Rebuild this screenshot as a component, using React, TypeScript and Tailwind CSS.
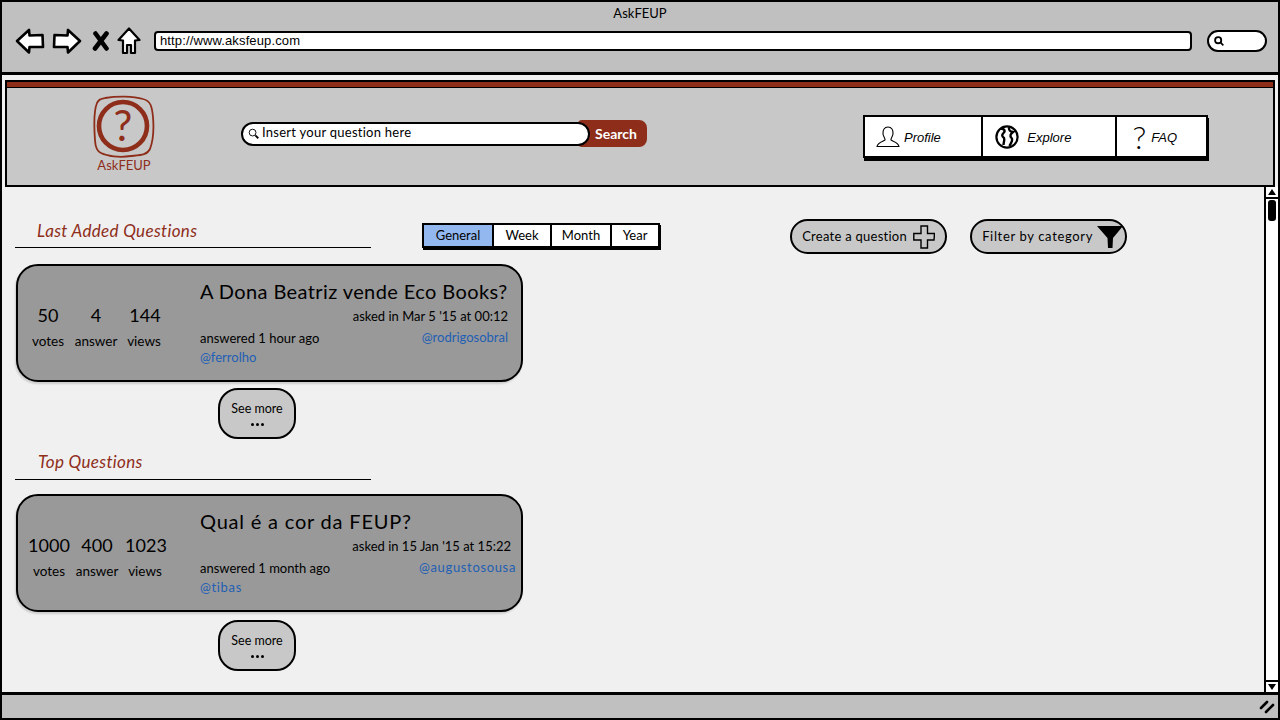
const SKETCH = "font-['Lato','Noto_Sans',sans-serif]"

function BackIcon() {
  return (
    <svg width="30" height="26" viewBox="0 0 30 26" fill="#fff" stroke="#000" strokeWidth="2.6" strokeLinejoin="round">
      <path d="M2 13 L14 2 L14.5 7.5 L27.5 7 L28 19 L14.5 19 L14 24.5 Z" />
    </svg>
  )
}

function ForwardIcon() {
  return (
    <svg width="30" height="26" viewBox="0 0 30 26" fill="#fff" stroke="#000" strokeWidth="2.6" strokeLinejoin="round">
      <path d="M28 13 L16 2 L15.5 7.5 L2.5 7 L2 19 L15.5 19 L16 24.5 Z" />
    </svg>
  )
}

function CloseIcon() {
  return (
    <svg width="18" height="20" viewBox="0 0 18 20" stroke="#000" strokeWidth="4.6" strokeLinecap="round">
      <path d="M3.5 2.5 L14.5 17.5 M14.5 2.5 L3 17.5" />
    </svg>
  )
}

function HomeIcon() {
  return (
    <svg width="24" height="28" viewBox="0 0 24 28" fill="#fff" stroke="#000" strokeWidth="2.2" strokeLinejoin="round">
      <path d="M12 1.5 L22.5 13 L18 13.5 L18 26 L14 26 L14 18 L10 18 L10 26 L6 26 L6 13.5 L1.5 13 Z" />
    </svg>
  )
}

function SearchGlass({ size = 12, bold = false }: { size?: number; bold?: boolean }) {
  return (
    <svg width={size} height={size} viewBox="0 0 12 12" fill="none" stroke="#000" strokeWidth={bold ? 2.2 : 1}>
      <circle cx="5" cy="5" r="3.7" />
      <path d="M8 8 L11.2 11.2" strokeWidth="2" />
    </svg>
  )
}

function Logo() {
  return (
    <svg width="62" height="64" viewBox="0 0 62 64" fill="none" stroke="#8e2d1a">
      <path
        d="M12 3 C24 1 40 1 50 4 C58 6 59 12 60 22 C61 34 60 46 57 54 C54 60 48 60 38 61 C26 63 14 61 8 58 C2 55 2 48 1.5 36 C1 24 1.5 14 4 8 C6 4 8 4 12 3 Z"
        strokeWidth="1.8"
      />
      <circle cx="30" cy="31" r="24" strokeWidth="4.6" />
      <text x="30" y="46" textAnchor="middle" fontFamily="Lato, sans-serif" fontSize="42" fill="#8e2d1a" stroke="none">
        ?
      </text>
    </svg>
  )
}

function ProfileIcon() {
  return (
    <svg width="24" height="22" viewBox="0 0 24 22" fill="none" stroke="#000" strokeWidth="1.1">
      <path d="M1 20.5 C2 16 7 15.5 9 14 C9.5 12.5 7.5 11 7 8 C6.5 4 8.5 1 12 1 C15.5 1 17.5 4 17 8 C16.5 11 14.5 12.5 15 14 C17 15.5 22 16 23 20.5 Z" />
    </svg>
  )
}

function GlobeIcon() {
  return (
    <svg width="24" height="24" viewBox="0 0 24 24">
      <circle cx="12" cy="12" r="10.6" fill="#fff" stroke="#000" strokeWidth="2.2" />
      <path d="M6 3.5 C10 4 10.5 6 8.5 8 C6.5 10 7 11.5 9 13 C10 15 8.5 17 8.5 20" fill="none" stroke="#000" strokeWidth="2.4" />
      <path d="M14 2.5 C13.5 5 15 6.5 18 7 C15.5 9 14.5 11 16.5 13 C18.5 15 16 18 14.5 21" fill="none" stroke="#000" strokeWidth="2.4" />
    </svg>
  )
}

function PlusIcon() {
  return (
    <svg width="22" height="24" viewBox="0 0 22 24" fill="none" stroke="#000" strokeWidth="1.4">
      <path d="M8 1 L14.5 1 L14.5 8.5 L21.5 8.5 L21 15 L14.5 15 L14.5 23 L8 23 L8 15 L0.8 15 L0.8 8.5 L8 8.5 Z" />
    </svg>
  )
}

function FunnelIcon() {
  return (
    <svg width="26" height="23" viewBox="0 0 26 23" fill="#000">
      <path d="M0 1 L26 1 L16 13 L15.5 23 L11 23 L10.5 13 Z" />
    </svg>
  )
}

function NavItem({ label, width, icon, gap }: { label: string; width: string; icon: React.ReactNode; gap: string }) {
  return (
    <div className={`flex h-full items-center border-r-2 border-black last:border-r-0 ${width} ${gap}`}>
      {icon}
      <span className="pt-[2px] font-['Liberation_Sans',sans-serif] text-[13px] italic text-black">{label}</span>
    </div>
  )
}

interface Question {
  title: string
  titleTrack: string
  votes: string
  answers: string
  views: string
  asked: string
  when: string
  author: string
  answerer: string
  askedRight: string
  authorRight: string
  handleTrack: string
  statPad: string
}

function QuestionCard({ q }: { q: Question }) {
  return (
    <div className="flex h-[118px] w-[507px] rounded-[22px] border-2 border-black bg-[#999999] shadow-[-1px_2px_2px_rgba(0,0,0,0.15)]">
      <div className={`flex w-[182px] shrink-0 flex-col pt-[36px] ${q.statPad}`}>
        <div className="grid grid-cols-[48px_48px_50px] justify-items-center text-[18px] leading-[26px] text-black">
          <span>{q.votes}</span>
          <span>{q.answers}</span>
          <span>{q.views}</span>
        </div>
        <div className="mt-[4px] grid grid-cols-[48px_48px_48px] justify-items-center text-[13.5px] leading-[18px] text-black">
          <span>votes</span>
          <span>answer</span>
          <span>views</span>
        </div>
      </div>
      <div className="flex flex-1 flex-col pt-[12px]">
        <div className={`text-[20px] leading-[26px] text-black ${q.titleTrack}`}>{q.title}</div>
        <div className={`mt-[3px] text-right text-[13px] leading-[18px] text-black ${q.askedRight}`}>{q.asked}</div>
        <div className="mt-[4px] flex items-start justify-between">
          <span className="text-[13px] leading-[18px] text-black">{q.when}</span>
          <span className={`-mt-[1px] text-[13px] leading-[18px] text-[#1f5fb4] ${q.handleTrack} ${q.authorRight}`}>{q.author}</span>
        </div>
        <div className={`mt-[1px] text-[13px] leading-[18px] text-[#1f5fb4] ${q.handleTrack}`}>{q.answerer}</div>
      </div>
    </div>
  )
}

function SeeMore() {
  return (
    <div className="ml-[203px] flex h-[51px] w-[78px] flex-col items-center justify-center rounded-[20px] border-2 border-black bg-[#c8c8c8] text-black">
      <span className="text-[12.5px] leading-[14px]">See more</span>
      <span className="mt-[7px] flex gap-[2px]">
        <i className="size-[3px] rounded-full bg-black" />
        <i className="size-[3px] rounded-full bg-black" />
        <i className="size-[3px] rounded-full bg-black" />
      </span>
    </div>
  )
}

const first: Question = {
  title: "A Dona Beatriz vende Eco Books?",
  titleTrack: "tracking-[0.02em]",
  votes: "50",
  answers: "4",
  views: "144",
  asked: "asked in Mar 5 '15 at 00:12",
  when: "answered 1 hour ago",
  author: "@rodrigosobral",
  answerer: "@ferrolho",
  askedRight: "pr-[13px]",
  authorRight: "pr-[13px]",
  handleTrack: "tracking-normal",
  statPad: "pl-[6px]",
}

const second: Question = {
  title: "Qual é a cor da FEUP?",
  titleTrack: "tracking-[0.04em]",
  votes: "1000",
  answers: "400",
  views: "1023",
  asked: "asked in 15 Jan '15 at 15:22",
  when: "answered 1 month ago",
  author: "@augustosousa",
  answerer: "@tibas",
  askedRight: "pr-[10px]",
  authorRight: "pr-[5px]",
  handleTrack: "tracking-[0.05em]",
  statPad: "pl-[7px]",
}

export default function App() {
  return (
    <div className={`flex h-[720px] w-[1280px] flex-col overflow-hidden border-2 border-black bg-[#f0f0f0] ${SKETCH}`}>
      {/* browser chrome */}
      <div className="h-[73px] shrink-0 border-b-[3px] border-black bg-[#c0c0c0]">
        <div className="pt-[3px] text-center text-[13px] leading-[17px] text-black">AskFEUP</div>
        <div className="mt-[4px] flex h-[30px] items-center pl-[13px]">
          <BackIcon />
          <span className="ml-[7px]"><ForwardIcon /></span>
          <span className="ml-[10px]"><CloseIcon /></span>
          <span className="ml-[7px]"><HomeIcon /></span>
          <div className="ml-[13px] flex h-[20px] w-[1038px] items-center rounded-[4px] border-2 border-black bg-white pl-[4px] font-['Liberation_Sans',sans-serif] text-[13px] tracking-[0.01em] text-black">
            http://www.aksfeup.com
          </div>
          <div className="ml-[15px] flex h-[22px] w-[60px] items-center rounded-full border-2 border-black bg-white pl-[5px]">
            <SearchGlass size={10} bold />
          </div>
        </div>
      </div>

      {/* site header */}
      <div className="mx-[3px] mt-[5px] flex h-[107px] shrink-0 flex-col border-2 border-black bg-[#c8c8c8]">
        <div className="h-[6px] shrink-0 border-b border-black bg-[#8e2d1a]" />
        <div className="flex flex-1 items-start">
          <div className="ml-[86px] mt-[7px] flex w-[62px] flex-col items-center">
            <Logo />
            <span className="mt-[-2px] text-[13px] leading-[16px] text-[#8e2d1a]">AskFEUP</span>
          </div>
          <div className="ml-[86px] mt-[32px] flex items-center">
            <div className="z-10 flex h-[24px] w-[349px] items-center gap-[3px] rounded-full border-2 border-black bg-white pb-[1px] pl-[5px] text-[13px] tracking-[0.02em] text-black">
              <SearchGlass size={11} />
              Insert your question here
            </div>
            <div className="-ml-[12px] flex h-[27px] w-[69px] items-center justify-end rounded-r-[8px] rounded-l-[4px] bg-[#8e2d1a] pb-[1px] pr-[10px] text-[14px] font-bold text-white">
              Search
            </div>
          </div>
          <div className="ml-[216px] mt-[27px] flex h-[43px] w-[345px] border-2 border-black bg-white shadow-[1px_3px_0_#000]">
            <NavItem label="Profile" width="w-[119px]" gap="gap-[4px] pl-[11px]" icon={<ProfileIcon />} />
            <NavItem label="Explore" width="w-[134px]" gap="gap-[8px] pl-[12px]" icon={<GlobeIcon />} />
            <NavItem
              label="FAQ"
              width="w-[90px]"
              gap="gap-[5px] pl-[16px]"
              icon={<span className="text-[32px] font-light leading-none">?</span>}
            />
          </div>
        </div>
      </div>

      {/* page body */}
      <div className="flex min-h-0 flex-1">
        <div className="min-w-0 flex-1 pl-[13px] pt-[31px]">
          <div className="flex items-start">
            <div className="mt-[1px] h-[29px] w-[356px] border-b-[1.5px] border-black pl-[22px] pt-[1px] text-[17px] italic leading-[22px] tracking-[0.02em] text-[#8e2d1a]">
              Last Added Questions
            </div>
            <div className="ml-[51px] mt-[5px] flex h-[25px] w-[238px] border-2 border-black bg-white text-[13px] text-black shadow-[1px_2px_0_#000]">
              <div className="flex w-[70px] items-center justify-center border-r-2 border-black bg-[#93b8f0]">General</div>
              <div className="flex w-[58px] items-center justify-center border-r-2 border-black">Week</div>
              <div className="flex w-[60px] items-center justify-center border-r-2 border-black">Month</div>
              <div className="flex flex-1 items-center justify-center">Year</div>
            </div>
            <div className="ml-[130px] mt-[1px] flex h-[35px] w-[157px] items-center justify-end gap-[6px] rounded-full border-2 border-black bg-[#c8c8c8] pr-[10px] text-[13px] tracking-[0.02em] text-black">
              Create a question
              <PlusIcon />
            </div>
            <div className="ml-[23px] mt-[1px] flex h-[35px] w-[157px] items-center justify-end gap-[4px] rounded-full border-2 border-black bg-[#c8c8c8] pr-[2px] text-[13px] tracking-[0.05em] text-black">
              Filter by category
              <FunnelIcon />
            </div>
          </div>

          <div className="ml-[1px] mt-[10px]">
            <QuestionCard q={first} />
          </div>
          <div className="mt-[6px]">
            <SeeMore />
          </div>

          <div className="mt-[12px] h-[29px] w-[356px] border-b-[1.5px] border-black pl-[23px] text-[17px] italic leading-[22px] tracking-[0.02em] text-[#8e2d1a]">
            Top Questions
          </div>
          <div className="ml-[1px] mt-[14px]">
            <QuestionCard q={second} />
          </div>
          <div className="mt-[8px]">
            <SeeMore />
          </div>
        </div>

        {/* scrollbar */}
        <div className="flex w-[14px] shrink-0 flex-col border-l-2 border-black bg-white">
          <div className="flex h-[12px] shrink-0 items-center justify-center border-b-2 border-black">
            <span className="h-0 w-0 border-x-[4px] border-b-[6px] border-x-transparent border-b-black" />
          </div>
          <div className="mx-auto mt-[1px] h-[21px] w-[8px] rounded-[3px] bg-black" />
          <div className="flex-1" />
          <div className="flex h-[12px] shrink-0 items-center justify-center border-t-2 border-black">
            <span className="h-0 w-0 border-x-[4px] border-t-[6px] border-x-transparent border-t-black" />
          </div>
        </div>
      </div>

      {/* status bar */}
      <div className="flex h-[26px] shrink-0 items-center justify-end border-t-[3px] border-black bg-[#c0c0c0] pr-[3px]">
        <svg width="16" height="14" viewBox="0 0 16 14" stroke="#000" strokeWidth="2.6" strokeLinecap="round">
          <path d="M2 8 L8 2 M7 12 L14 5" />
        </svg>
      </div>
    </div>
  )
}
